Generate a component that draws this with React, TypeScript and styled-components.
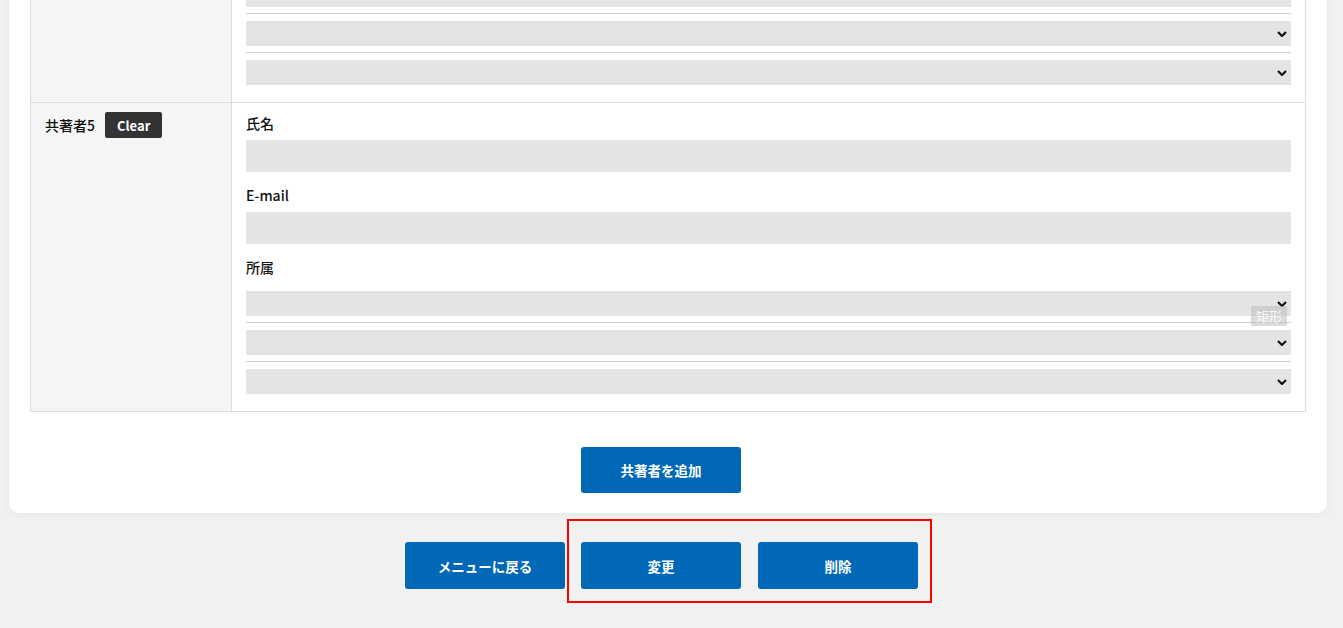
import React from "react";
import styled, { createGlobalStyle } from "styled-components";

const GlobalStyle = createGlobalStyle`
  html, body { margin: 0; padding: 0; }
  body {
    background: #f1f1f1;
    font-family: "Noto Sans CJK JP", "Noto Sans", sans-serif;
    color: #111;
    overflow: hidden;
  }
  * { box-sizing: border-box; }
`;

const Page = styled.div`
  padding: 0 16px 40px 9px;
`;

const Card = styled.section`
  margin-top: -50px;
  background: #fff;
  border-radius: 10px;
  box-shadow: 0 0 8px rgba(0, 0, 0, 0.06);
  padding: 21px 21px 20px;
`;

const Table = styled.div`
  border: 1px solid #dcdcdc;
`;

const Row = styled.div`
  display: grid;
  grid-template-columns: 201px 1fr;
  & + & { border-top: 1px solid #dcdcdc; }
`;

const HeadCell = styled.div`
  background: #f5f5f5;
  border-right: 1px solid #dcdcdc;
  padding: 10px 14px;
  display: flex;
  align-items: flex-start;
`;

const HeadLine = styled.div`
  display: flex;
  align-items: center;
  gap: 10px;
  font-size: 14px;
  font-weight: 500;
  height: 26px;
  margin-top: -1px;
`;

const ClearButton = styled.button`
  height: 26px;
  padding: 0 12px;
  border: none;
  border-radius: 2px;
  background: #333;
  color: #fff;
  font-family: inherit;
  font-size: 13px;
  font-weight: 700;
  cursor: pointer;
`;

const BodyCell = styled.div`
  padding: 10px 14px 17px;
`;

const Field = styled.div`
  & + & { margin-top: 13px; }
`;

const Label = styled.div`
  font-size: 14px;
  font-weight: 500;
  line-height: 21px;
  margin-bottom: 6px;
`;

const TextInput = styled.input`
  display: block;
  width: 100%;
  height: 32px;
  border: none;
  background: #e4e4e4;
  font-family: inherit;
  font-size: 14px;
  padding: 0 10px;
  outline: none;
`;

const SelectGroup = styled.div<{ $flush?: boolean }>`
  position: relative;
  margin-top: ${(p) => (p.$flush ? "0" : "13px")};
`;

const SelectWrap = styled.div`
  position: relative;
`;

const Divider = styled.hr`
  border: none;
  border-top: 1px solid #cfcfcf;
  margin: 6px 0 7px;
`;

const Select = styled.select`
  display: block;
  width: 100%;
  height: 25px;
  border: none;
  border-radius: 0;
  background: #e4e4e4;
  appearance: none;
  font-family: inherit;
  font-size: 14px;
  padding: 0 24px 0 8px;
  outline: none;
`;

const Chevron = styled.svg`
  position: absolute;
  right: 4px;
  top: 50%;
  margin-top: -3px;
  width: 10px;
  height: 6px;
  pointer-events: none;
`;

const Tag = styled.span`
  position: absolute;
  top: 15px;
  right: 4px;
  width: 36px;
  height: 20px;
  border-radius: 2px;
  background: rgba(190, 190, 190, 0.55);
  color: rgba(255, 255, 255, 0.85);
  font-size: 13px;
  line-height: 20px;
  text-align: center;
`;

const AddRow = styled.div`
  display: flex;
  justify-content: center;
  padding-right: 14px;
  margin-top: 35px;
`;

const BlueButton = styled.button<{ $tall?: boolean }>`
  width: 160px;
  height: ${(p) => (p.$tall ? "47px" : "46px")};
  border: none;
  border-radius: 3px;
  background: #0068b7;
  color: #fff;
  font-family: inherit;
  font-size: 13.5px;
  font-weight: 700;
  cursor: pointer;
`;

const Footer = styled.div`
  display: flex;
  justify-content: center;
  gap: 16px;
  padding-right: 13px;
  margin-top: 29px;
`;

const Pair = styled.div`
  position: relative;
  display: flex;
  gap: 17px;
`;

const Highlight = styled.div`
  position: absolute;
  top: -23px;
  left: -14px;
  right: -14px;
  bottom: -14px;
  border: 2px solid #ff0000;
  pointer-events: none;
`;

const ChevronIcon = () => (
  <Chevron viewBox="0 0 10 6">
    <path d="M1 1 L5 5 L9 1" fill="none" stroke="#111" strokeWidth="2.2" />
  </Chevron>
);

const AffSelect = () => (
  <SelectWrap>
    <Select defaultValue="">
      <option value=""></option>
    </Select>
    <ChevronIcon />
  </SelectWrap>
);

const AffSelects = ({ tag, flush }: { tag?: boolean; flush?: boolean }) => (
  <SelectGroup $flush={flush}>
    <AffSelect />
    <Divider />
    <AffSelect />
    <Divider />
    <AffSelect />
    {tag && <Tag>矩形</Tag>}
  </SelectGroup>
);

/* Lower part of the previous author row (scrolled off above the viewport) */
const TailRow = () => (
  <Row>
    <HeadCell />
    <BodyCell>
      <AffSelects flush />
    </BodyCell>
  </Row>
);

const AuthorRow = ({ name, tag }: { name: string; tag?: boolean }) => (
  <Row>
    <HeadCell>
      <HeadLine>
        {name}
        <ClearButton type="button">Clear</ClearButton>
      </HeadLine>
    </HeadCell>
    <BodyCell>
      <Field>
        <Label>氏名</Label>
        <TextInput type="text" />
      </Field>
      <Field>
        <Label>E-mail</Label>
        <TextInput type="text" />
      </Field>
      <Field>
        <Label>所属</Label>
      </Field>
      <AffSelects tag={tag} />
    </BodyCell>
  </Row>
);

export default function App() {
  return (
    <>
      <GlobalStyle />
      <Page>
        <Card>
          <Table>
            <TailRow />
            <AuthorRow name="共著者5" tag />
          </Table>
          <AddRow>
            <BlueButton type="button">共著者を追加</BlueButton>
          </AddRow>
        </Card>
        <Footer>
          <BlueButton type="button" $tall>メニューに戻る</BlueButton>
          <Pair>
            <BlueButton type="button" $tall>変更</BlueButton>
            <BlueButton type="button" $tall>削除</BlueButton>
            <Highlight />
          </Pair>
        </Footer>
      </Page>
    </>
  );
}
